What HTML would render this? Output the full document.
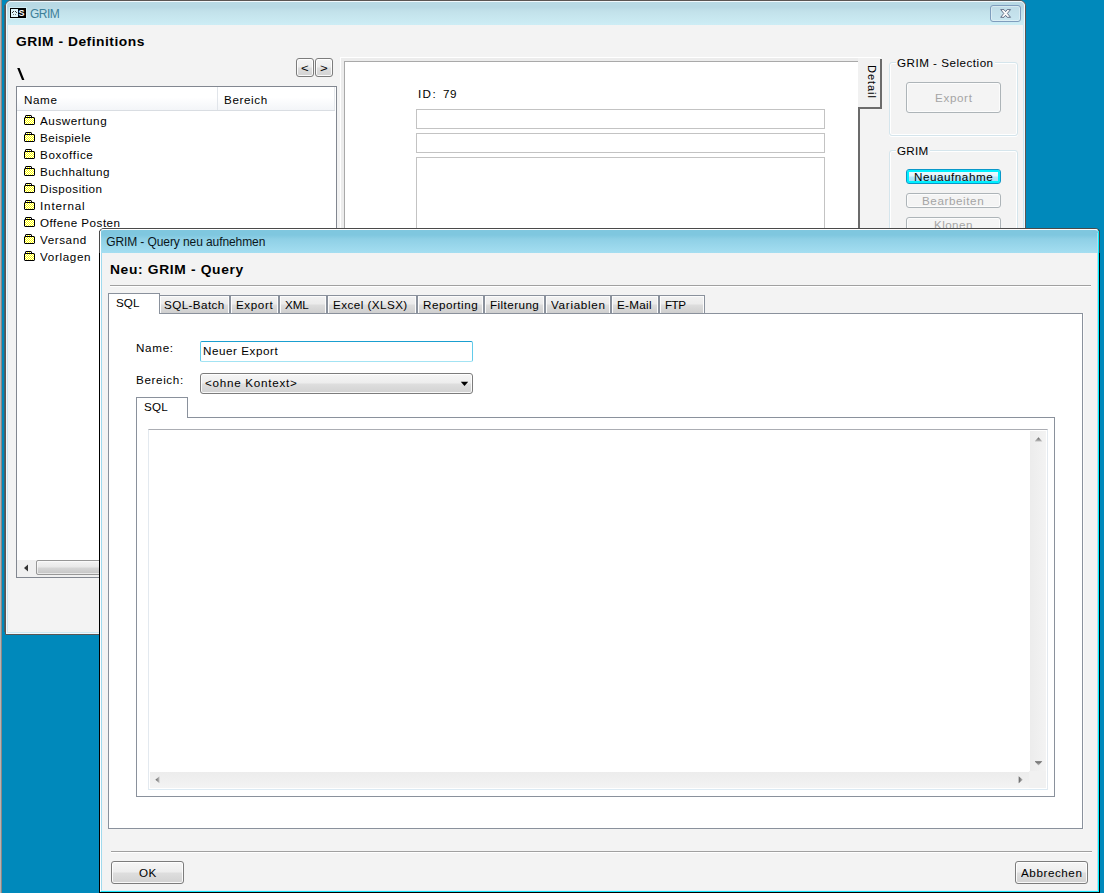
<!DOCTYPE html>
<html><head><meta charset="utf-8"><title>GRIM</title>
<style>
html,body{margin:0;padding:0;}
body{width:1104px;height:893px;overflow:hidden;background:#0089bb;font-family:"Liberation Sans",sans-serif;font-size:11px;color:#000;}
#desk{position:relative;width:1104px;height:893px;overflow:hidden;background:#0089bb;}
#desk div,#desk span,#desk svg,#desk i{position:absolute;box-sizing:border-box;display:block;}
.t{white-space:nowrap;line-height:16px;height:16px;transform-origin:0 0;}
.edge0{left:0;top:0;width:1px;height:893px;background:#b4b4b4;}
.edge1{left:1px;top:0;width:1px;height:893px;background:#8d8684;}
/* generic Win7 button */
.btn{border:1px solid #7c7c7c;border-radius:3px;background:linear-gradient(#f6f6f6 0%,#ededed 48%,#dedede 52%,#d2d2d2 100%);box-shadow:inset 0 0 0 1px rgba(255,255,255,.85);}
.btn.dis{border-color:#adb4b8;background:#f4f4f4;box-shadow:inset 0 0 0 1px #fcfcfc;}
.btn.def{border-color:#0a98c9;background:linear-gradient(#f4fcff 0%,#dff4fd 45%,#b5e6fa 55%,#9adcf5 100%);box-shadow:inset 0 0 0 2px #00f0ff;}
/* tabs */
.tab{border:1px solid #8a919c;border-bottom:none;background:linear-gradient(#f2f2f2 0%,#ebebeb 48%,#dddddd 52%,#cfcfcf 100%);box-shadow:inset 1px 1px 0 #fcfcfc,inset -1px 0 0 #fcfcfc;}
.tab.sel{background:#fff;box-shadow:none;}
.pane{border:1px solid #8a919c;background:#fff;}
.hline{height:2px;border-top:1px solid #a0a0a0;border-bottom:1px solid #fff;}
.fold{width:11px;height:10px;}
.inp{border:1px solid #c3c3c3;background:#fff;}
.grp{border:1px solid #d5e5ec;border-radius:3px;box-shadow:inset 0 0 0 1px #fff,0 1px 0 #fff;}

</style></head>
<body>
<div id="desk">
<div class="edge0"></div><div class="edge1"></div>
<!-- ===== window 1 ===== -->
<div style="left:4px;top:5px;width:1px;height:627px;background:rgba(91,85,83,.72);"></div>
<div style="left:5px;top:0;width:1021px;height:635px;background:#f3f3f3;border:1px solid #5b5553;border-radius:6px 6px 0 0;"></div>
<div style="left:6px;top:1px;width:1019px;height:633px;border:1px solid #f1f8fc;border-radius:5px 5px 0 0;"></div>
<div style="left:7px;top:2px;width:1017px;height:631px;border:1px solid #cde9f3;border-radius:4px 4px 0 0;"></div>
<div style="left:7px;top:2px;width:1017px;height:23px;background:linear-gradient(#b8d9e4 0%,#b8d9e4 22%,#c2e1ea 40%,#cdedf5 100%);border-radius:4px 4px 0 0;"></div>
<!-- app icon -->
<div style="left:10px;top:8px;width:16px;height:10px;background:#000;box-shadow:0 0 0 1px rgba(225,247,252,.55);"></div>
<div style="left:11px;top:9px;width:7px;height:8px;background:#dff5fb;"></div>
<svg style="left:11px;top:9px;width:7px;height:8px" viewBox="0 0 7 8" shape-rendering="crispEdges"><g fill="#3c3c3c"><rect x="2" y="2" width="1" height="1"/><rect x="4" y="2" width="1" height="1"/><rect x="1" y="3" width="1" height="1"/><rect x="5" y="3" width="1" height="1"/></g><g fill="#7a7a7a"><rect x="2" y="5" width="1" height="1"/><rect x="4" y="5" width="1" height="1"/></g></svg>
<span style="left:18.6px;top:7px;width:6px;height:12px;font-size:9px;line-height:12px;font-weight:700;color:#fff;">S</span>
<!-- close button -->
<div style="left:990px;top:5px;width:31px;height:17px;border:1px solid #7f9dbd;border-radius:3px;background:linear-gradient(#bfdce7,#c9e6f0);box-shadow:inset 0 0 0 1px rgba(255,255,255,.35);"></div>
<svg style="left:999px;top:8px;width:14px;height:11px" viewBox="0 0 14 11"><path d="M1.7 1.6 L5 1.6 L6.6 3.6 L8.2 1.6 L11.5 1.6 L8.4 5.45 L11.5 9.3 L8.2 9.3 L6.6 7.3 L5 9.3 L1.7 9.3 L4.8 5.45 Z" fill="#fcfcfc" stroke="#46536f" stroke-width=".8" stroke-linejoin="round"/></svg>
<svg style="left:16px;top:67px;width:10px;height:14px" viewBox="0 0 10 14"><path d="M1.2 1 L3.6 1 L8.4 13 L6 13 Z" fill="#000"/></svg>
<!-- nav buttons -->
<div class="btn" style="left:296px;top:58px;width:18px;height:19px;"></div>
<div class="btn" style="left:315px;top:58px;width:18px;height:19px;"></div>
<span class="t" style="left:300.6px;top:60px;font-size:11px;transform:scaleX(1.2);">&lt;</span>
<span class="t" style="left:319.6px;top:60px;font-size:11px;transform:scaleX(1.2);">&gt;</span>
<!-- list -->
<div style="left:16px;top:86px;width:321px;height:492px;border:1px solid #828790;background:#fff;"></div>
<div style="left:17px;top:87px;width:318px;height:24px;background:linear-gradient(#ffffff 0%,#ffffff 45%,#f3f5f8 100%);border-bottom:1px solid #d9dde2;"></div>
<div style="left:217px;top:87px;width:1px;height:23px;background:#e1e5ea;"></div>
<div style="left:334px;top:87px;width:1px;height:23px;background:#e6e9ed;"></div>
<svg width="0" height="0" style="left:0;top:0"><defs>
<pattern id="dz" width="2" height="2" patternUnits="userSpaceOnUse"><rect width="2" height="2" fill="#fff"/><rect width="1" height="1" fill="#ff0"/><rect x="1" y="1" width="1" height="1" fill="#ff0"/></pattern>
</defs></svg>
<svg class="fold" style="left:24px;top:115px" viewBox="0 0 11 10" shape-rendering="crispEdges"><rect x="2" y="1" width="5" height="1" fill="url(#dz)"/><rect x="1" y="3" width="9" height="6" fill="url(#dz)"/><g fill="#000"><rect x="2" y="0" width="5" height="1"/><rect x="1" y="1" width="1" height="1"/><rect x="7" y="1" width="1" height="1"/><rect x="1" y="2" width="9" height="1"/><rect x="0" y="3" width="1" height="6"/><rect x="10" y="3" width="1" height="6"/><rect x="1" y="9" width="9" height="1"/></g><g fill="#000" opacity=".45"><rect x="0" y="2" width="1" height="1"/><rect x="10" y="2" width="1" height="1"/><rect x="0" y="9" width="1" height="1"/><rect x="10" y="9" width="1" height="1"/><rect x="1" y="0" width="1" height="1"/><rect x="7" y="0" width="1" height="1"/></g></svg>
<svg class="fold" style="left:24px;top:132px" viewBox="0 0 11 10" shape-rendering="crispEdges"><rect x="2" y="1" width="5" height="1" fill="url(#dz)"/><rect x="1" y="3" width="9" height="6" fill="url(#dz)"/><g fill="#000"><rect x="2" y="0" width="5" height="1"/><rect x="1" y="1" width="1" height="1"/><rect x="7" y="1" width="1" height="1"/><rect x="1" y="2" width="9" height="1"/><rect x="0" y="3" width="1" height="6"/><rect x="10" y="3" width="1" height="6"/><rect x="1" y="9" width="9" height="1"/></g><g fill="#000" opacity=".45"><rect x="0" y="2" width="1" height="1"/><rect x="10" y="2" width="1" height="1"/><rect x="0" y="9" width="1" height="1"/><rect x="10" y="9" width="1" height="1"/><rect x="1" y="0" width="1" height="1"/><rect x="7" y="0" width="1" height="1"/></g></svg>
<svg class="fold" style="left:24px;top:149px" viewBox="0 0 11 10" shape-rendering="crispEdges"><rect x="2" y="1" width="5" height="1" fill="url(#dz)"/><rect x="1" y="3" width="9" height="6" fill="url(#dz)"/><g fill="#000"><rect x="2" y="0" width="5" height="1"/><rect x="1" y="1" width="1" height="1"/><rect x="7" y="1" width="1" height="1"/><rect x="1" y="2" width="9" height="1"/><rect x="0" y="3" width="1" height="6"/><rect x="10" y="3" width="1" height="6"/><rect x="1" y="9" width="9" height="1"/></g><g fill="#000" opacity=".45"><rect x="0" y="2" width="1" height="1"/><rect x="10" y="2" width="1" height="1"/><rect x="0" y="9" width="1" height="1"/><rect x="10" y="9" width="1" height="1"/><rect x="1" y="0" width="1" height="1"/><rect x="7" y="0" width="1" height="1"/></g></svg>
<svg class="fold" style="left:24px;top:166px" viewBox="0 0 11 10" shape-rendering="crispEdges"><rect x="2" y="1" width="5" height="1" fill="url(#dz)"/><rect x="1" y="3" width="9" height="6" fill="url(#dz)"/><g fill="#000"><rect x="2" y="0" width="5" height="1"/><rect x="1" y="1" width="1" height="1"/><rect x="7" y="1" width="1" height="1"/><rect x="1" y="2" width="9" height="1"/><rect x="0" y="3" width="1" height="6"/><rect x="10" y="3" width="1" height="6"/><rect x="1" y="9" width="9" height="1"/></g><g fill="#000" opacity=".45"><rect x="0" y="2" width="1" height="1"/><rect x="10" y="2" width="1" height="1"/><rect x="0" y="9" width="1" height="1"/><rect x="10" y="9" width="1" height="1"/><rect x="1" y="0" width="1" height="1"/><rect x="7" y="0" width="1" height="1"/></g></svg>
<svg class="fold" style="left:24px;top:183px" viewBox="0 0 11 10" shape-rendering="crispEdges"><rect x="2" y="1" width="5" height="1" fill="url(#dz)"/><rect x="1" y="3" width="9" height="6" fill="url(#dz)"/><g fill="#000"><rect x="2" y="0" width="5" height="1"/><rect x="1" y="1" width="1" height="1"/><rect x="7" y="1" width="1" height="1"/><rect x="1" y="2" width="9" height="1"/><rect x="0" y="3" width="1" height="6"/><rect x="10" y="3" width="1" height="6"/><rect x="1" y="9" width="9" height="1"/></g><g fill="#000" opacity=".45"><rect x="0" y="2" width="1" height="1"/><rect x="10" y="2" width="1" height="1"/><rect x="0" y="9" width="1" height="1"/><rect x="10" y="9" width="1" height="1"/><rect x="1" y="0" width="1" height="1"/><rect x="7" y="0" width="1" height="1"/></g></svg>
<svg class="fold" style="left:24px;top:200px" viewBox="0 0 11 10" shape-rendering="crispEdges"><rect x="2" y="1" width="5" height="1" fill="url(#dz)"/><rect x="1" y="3" width="9" height="6" fill="url(#dz)"/><g fill="#000"><rect x="2" y="0" width="5" height="1"/><rect x="1" y="1" width="1" height="1"/><rect x="7" y="1" width="1" height="1"/><rect x="1" y="2" width="9" height="1"/><rect x="0" y="3" width="1" height="6"/><rect x="10" y="3" width="1" height="6"/><rect x="1" y="9" width="9" height="1"/></g><g fill="#000" opacity=".45"><rect x="0" y="2" width="1" height="1"/><rect x="10" y="2" width="1" height="1"/><rect x="0" y="9" width="1" height="1"/><rect x="10" y="9" width="1" height="1"/><rect x="1" y="0" width="1" height="1"/><rect x="7" y="0" width="1" height="1"/></g></svg>
<svg class="fold" style="left:24px;top:217px" viewBox="0 0 11 10" shape-rendering="crispEdges"><rect x="2" y="1" width="5" height="1" fill="url(#dz)"/><rect x="1" y="3" width="9" height="6" fill="url(#dz)"/><g fill="#000"><rect x="2" y="0" width="5" height="1"/><rect x="1" y="1" width="1" height="1"/><rect x="7" y="1" width="1" height="1"/><rect x="1" y="2" width="9" height="1"/><rect x="0" y="3" width="1" height="6"/><rect x="10" y="3" width="1" height="6"/><rect x="1" y="9" width="9" height="1"/></g><g fill="#000" opacity=".45"><rect x="0" y="2" width="1" height="1"/><rect x="10" y="2" width="1" height="1"/><rect x="0" y="9" width="1" height="1"/><rect x="10" y="9" width="1" height="1"/><rect x="1" y="0" width="1" height="1"/><rect x="7" y="0" width="1" height="1"/></g></svg>
<svg class="fold" style="left:24px;top:234px" viewBox="0 0 11 10" shape-rendering="crispEdges"><rect x="2" y="1" width="5" height="1" fill="url(#dz)"/><rect x="1" y="3" width="9" height="6" fill="url(#dz)"/><g fill="#000"><rect x="2" y="0" width="5" height="1"/><rect x="1" y="1" width="1" height="1"/><rect x="7" y="1" width="1" height="1"/><rect x="1" y="2" width="9" height="1"/><rect x="0" y="3" width="1" height="6"/><rect x="10" y="3" width="1" height="6"/><rect x="1" y="9" width="9" height="1"/></g><g fill="#000" opacity=".45"><rect x="0" y="2" width="1" height="1"/><rect x="10" y="2" width="1" height="1"/><rect x="0" y="9" width="1" height="1"/><rect x="10" y="9" width="1" height="1"/><rect x="1" y="0" width="1" height="1"/><rect x="7" y="0" width="1" height="1"/></g></svg>
<svg class="fold" style="left:24px;top:251px" viewBox="0 0 11 10" shape-rendering="crispEdges"><rect x="2" y="1" width="5" height="1" fill="url(#dz)"/><rect x="1" y="3" width="9" height="6" fill="url(#dz)"/><g fill="#000"><rect x="2" y="0" width="5" height="1"/><rect x="1" y="1" width="1" height="1"/><rect x="7" y="1" width="1" height="1"/><rect x="1" y="2" width="9" height="1"/><rect x="0" y="3" width="1" height="6"/><rect x="10" y="3" width="1" height="6"/><rect x="1" y="9" width="9" height="1"/></g><g fill="#000" opacity=".45"><rect x="0" y="2" width="1" height="1"/><rect x="10" y="2" width="1" height="1"/><rect x="0" y="9" width="1" height="1"/><rect x="10" y="9" width="1" height="1"/><rect x="1" y="0" width="1" height="1"/><rect x="7" y="0" width="1" height="1"/></g></svg>
<!-- list h-scrollbar -->
<div style="left:17px;top:560px;width:319px;height:17px;background:#f0f0f0;"></div>
<svg style="left:23px;top:564px;width:6px;height:8px" viewBox="0 0 6 8"><path d="M5 .5 L5 7.5 L1 4 Z" fill="#333"/></svg>
<div style="left:36px;top:560px;width:230px;height:15px;border:1px solid #979797;border-radius:2px;background:linear-gradient(#f4f4f4 0%,#e9e9e9 45%,#d6d6d6 55%,#c4c4c4 100%);box-shadow:inset 0 0 0 1px rgba(255,255,255,.6);"></div>
<!-- right-tabbed panel -->
<div style="left:340px;top:57px;width:520px;height:520px;background:#ececec;border-left:1px solid #fff;border-top:1px solid #fff;"></div>
<div style="left:858px;top:57px;width:23px;height:50px;background:#f1f1f1;border-top:1px solid #fff;"></div>
<div style="left:880px;top:59px;width:2px;height:50px;background:#6b6b6b;"></div>
<div style="left:859px;top:107px;width:23px;height:2px;background:#6b6b6b;"></div>
<div style="left:858px;top:107px;width:2px;height:470px;background:#6b6b6b;"></div>
<div style="left:344px;top:61px;width:514px;height:516px;background:#fff;border-left:1px solid #a9a9a9;border-top:1px solid #a9a9a9;"></div>
<div style="left:858px;top:58px;width:1px;height:49px;background:#f1f1f1;"></div>
<span class="t" style="left:879.5px;top:65px;transform:rotate(90deg);letter-spacing:0.95px;">Detail</span>
<div class="inp" style="left:416px;top:109px;width:409px;height:20px;"></div>
<div class="inp" style="left:416px;top:133px;width:409px;height:20px;"></div>
<div class="inp" style="left:416px;top:157px;width:409px;height:120px;"></div>
<!-- group boxes -->
<div class="grp" style="left:889px;top:62px;width:129px;height:74px;"></div>
<div style="left:896px;top:62px;width:99px;height:2px;background:#f3f3f3;"></div>
<div class="btn dis" style="left:906px;top:82px;width:95px;height:31px;"></div>
<div class="grp" style="left:889px;top:150px;width:129px;height:200px;"></div>
<div style="left:896px;top:150px;width:34px;height:2px;background:#f3f3f3;"></div>
<div class="btn def" style="left:906px;top:169px;width:95px;height:15px;"></div>
<div class="btn dis" style="left:906px;top:193px;width:95px;height:15px;"></div>
<div class="btn dis" style="left:906px;top:217px;width:95px;height:15px;"></div>

<span class="t" id="t0" style="left:29.90px;top:6px;font-size:12px;color:#3d7f99;letter-spacing:-0.46px;">GRIM</span>
<span class="t" id="t1" style="left:16.40px;top:34px;font-size:12px;font-weight:700;letter-spacing:0.45px;transform:scaleX(1.15);">GRIM - Definitions</span>
<span class="t" id="t2" style="left:23.90px;top:92px;font-size:11px;letter-spacing:0.57px;transform:scaleX(1.06);">Name</span>
<span class="t" id="t3" style="left:223.65px;top:92px;font-size:11px;letter-spacing:0.57px;transform:scaleX(1.06);">Bereich</span>
<span class="t" id="t4" style="left:39.90px;top:113px;font-size:11px;letter-spacing:0.53px;transform:scaleX(1.06);">Auswertung</span>
<span class="t" id="t5" style="left:39.90px;top:130px;font-size:11px;letter-spacing:0.41px;transform:scaleX(1.06);">Beispiele</span>
<span class="t" id="t6" style="left:39.90px;top:147px;font-size:11px;letter-spacing:0.60px;transform:scaleX(1.06);">Boxoffice</span>
<span class="t" id="t7" style="left:39.90px;top:164px;font-size:11px;letter-spacing:0.44px;transform:scaleX(1.06);">Buchhaltung</span>
<span class="t" id="t8" style="left:39.90px;top:181px;font-size:11px;letter-spacing:0.47px;transform:scaleX(1.06);">Disposition</span>
<span class="t" id="t9" style="left:39.90px;top:198px;font-size:11px;letter-spacing:0.78px;transform:scaleX(1.06);">Internal</span>
<span class="t" id="t10" style="left:39.90px;top:215px;font-size:11px;letter-spacing:0.45px;transform:scaleX(1.06);">Offene Posten</span>
<span class="t" id="t11" style="left:39.90px;top:232px;font-size:11px;letter-spacing:0.53px;transform:scaleX(1.06);">Versand</span>
<span class="t" id="t12" style="left:39.90px;top:249px;font-size:11px;letter-spacing:0.61px;transform:scaleX(1.06);">Vorlagen</span>
<span class="t" id="t13" style="left:417.65px;top:86px;font-size:11px;letter-spacing:1.29px;transform:scaleX(1.06);">ID:</span>
<span class="t" id="t14" style="left:443.15px;top:86px;font-size:11px;letter-spacing:0.48px;transform:scaleX(1.06);">79</span>
<span class="t" id="t15" style="left:896.90px;top:55px;font-size:11px;letter-spacing:0.46px;transform:scaleX(1.06);">GRIM - Selection</span>
<span class="t" id="t16" style="left:934.90px;top:90px;font-size:11px;color:#a5a5a5;letter-spacing:0.60px;transform:scaleX(1.06);">Export</span>
<span class="t" id="t17" style="left:896.90px;top:143px;font-size:11px;letter-spacing:0.25px;transform:scaleX(1.06);">GRIM</span>
<span class="t" id="t18" style="left:913.65px;top:169px;font-size:11px;letter-spacing:0.51px;transform:scaleX(1.06);">Neuaufnahme</span>
<span class="t" id="t19" style="left:921.90px;top:193px;font-size:11px;color:#a5a5a5;letter-spacing:0.55px;transform:scaleX(1.06);">Bearbeiten</span>
<span class="t" id="t20" style="left:933.80px;top:217px;font-size:11px;color:#a5a5a5;letter-spacing:0.39px;transform:scaleX(1.06);">Klonen</span>
<!-- ===== window 2 ===== -->
<div style="left:99px;top:228px;width:1001px;height:665px;background:#f3f3f3;border:1px solid #000;border-top-color:#4a4a4a;border-radius:5px 5px 0 0;"></div>
<div style="left:99px;top:231px;width:1px;height:22px;background:#4a4a4a;"></div>
<div style="left:1099px;top:231px;width:1px;height:22px;background:#454545;"></div>
<div style="left:100px;top:229px;width:999px;height:663px;border:1px solid #fff;border-right-color:#00f0ff;border-bottom-color:#19e9fc;border-radius:4px 4px 0 0;"></div>
<div style="left:101px;top:230px;width:997px;height:661px;border-left:1px solid #a0daee;border-right:1px solid #b8e0f0;border-bottom:1px solid #d9f0f8;"></div>
<div style="left:1096px;top:253px;width:1px;height:637px;background:#f8f2f0;"></div>
<div style="left:101px;top:230px;width:997px;height:23px;background:linear-gradient(#7fc7df 0%,#7fc7df 22%,#8fd0e6 40%,#a4def1 100%);border-radius:3px 3px 0 0;"></div>
<div style="left:1097px;top:233px;width:1px;height:20px;background:#b4dcee;"></div>
<!-- heading rule -->
<div class="hline" style="left:110px;top:285px;width:981px;"></div>
<!-- outer tab pane -->
<div class="pane" style="left:108px;top:313px;width:975px;height:516px;box-shadow:1px 0 0 #fbfbfb;"></div>
<div class="tab sel" style="left:108px;top:293px;width:52px;height:21px;"></div>
<div class="tab" style="left:160px;top:295px;width:70px;height:18px;border-left:none;"></div>
<div class="tab" style="left:230px;top:295px;width:49px;height:18px;"></div>
<div class="tab" style="left:279px;top:295px;width:48px;height:18px;"></div>
<div class="tab" style="left:327px;top:295px;width:90px;height:18px;"></div>
<div class="tab" style="left:417px;top:295px;width:67px;height:18px;"></div>
<div class="tab" style="left:484px;top:295px;width:61px;height:18px;"></div>
<div class="tab" style="left:545px;top:295px;width:66px;height:18px;"></div>
<div class="tab" style="left:611px;top:295px;width:48px;height:18px;"></div>
<div class="tab" style="left:659px;top:295px;width:46px;height:18px;"></div>
<!-- name input (focused) -->
<div style="left:200px;top:341px;width:273px;height:21px;background:#fff;border:1px solid #1a9fd0;border-bottom-color:#a3e3f3;border-left-color:#62cbea;border-right-color:#62cbea;border-radius:2px;"></div>
<!-- combo -->
<div class="btn" style="left:200px;top:373px;width:273px;height:21px;border-color:#7c7c7c;"></div>
<svg style="left:460px;top:381px;width:9px;height:6px" viewBox="0 0 9 6"><path d="M.8 .8 L8.2 .8 L4.5 5 Z" fill="#000"/></svg>
<!-- inner tab pane -->
<div class="pane" style="left:136px;top:417px;width:919px;height:380px;"></div>
<div class="tab sel" style="left:136px;top:397px;width:52px;height:21px;"></div>
<!-- memo -->
<div style="left:148px;top:429px;width:900px;height:361px;background:#fff;border:1px solid #e3e9ef;border-top-color:#abadb3;border-bottom-color:#dceaf3;"></div>
<div style="left:1030px;top:431px;width:16px;height:340px;background:linear-gradient(90deg,#ececec,#f3f3f3);"></div>
<div style="left:150px;top:772px;width:879px;height:16px;background:linear-gradient(#ececec,#f3f3f3);"></div>
<div style="left:1029px;top:771px;width:17px;height:17px;background:#f1f1f1;"></div>
<svg width="0" height="0" style="left:0;top:0"><defs><linearGradient id="gv" x1="0" y1="0" x2="0" y2="1"><stop offset="0" stop-color="#5f5f5f"/><stop offset="1" stop-color="#c0c0c0"/></linearGradient><linearGradient id="gh" x1="0" y1="0" x2="1" y2="0"><stop offset="0" stop-color="#5f5f5f"/><stop offset="1" stop-color="#c0c0c0"/></linearGradient><linearGradient id="gh2" x1="1" y1="0" x2="0" y2="0"><stop offset="0" stop-color="#5f5f5f"/><stop offset="1" stop-color="#c0c0c0"/></linearGradient></defs></svg>
<svg style="left:1035px;top:437px;width:8px;height:5px" viewBox="0 0 8 5"><path d="M3.5 .3 L7.3 4.4 L-.3 4.4 Z" fill="url(#gv)"/></svg>
<svg style="left:1035px;top:761px;width:8px;height:5px" viewBox="0 0 8 5"><path d="M-.3 .3 L7.3 .3 L3.5 4.5 Z" fill="url(#gv)"/></svg>
<svg style="left:155.4px;top:776px;width:5px;height:8px" viewBox="0 0 5 8"><path d="M4.5 .2 L4.5 7.2 L.4 3.7 Z" fill="url(#gh)"/></svg>
<svg style="left:1018px;top:776px;width:5px;height:8px" viewBox="0 0 5 8"><path d="M.7 .2 L4.8 3.7 L.7 7.2 Z" fill="url(#gh)"/></svg>
<!-- footer -->
<div class="hline" style="left:111px;top:851px;width:981px;"></div>
<div class="btn" style="left:111px;top:861px;width:73px;height:23px;"></div>
<div class="btn" style="left:1015px;top:861px;width:73px;height:23px;"></div>

<span class="t" id="t21" style="left:106.15px;top:234px;font-size:12px;color:#0a161c;letter-spacing:-0.09px;">GRIM - Query neu aufnehmen</span>
<span class="t" id="t22" style="left:109.65px;top:262px;font-size:12px;font-weight:700;letter-spacing:0.57px;transform:scaleX(1.15);">Neu: GRIM - Query</span>
<span class="t" id="t23" style="left:115.90px;top:295px;font-size:11px;letter-spacing:0.05px;transform:scaleX(1.06);">SQL</span>
<span class="t" id="t24" style="left:163.65px;top:297px;font-size:11px;letter-spacing:0.39px;transform:scaleX(1.06);">SQL-Batch</span>
<span class="t" id="t25" style="left:235.90px;top:297px;font-size:11px;letter-spacing:0.56px;transform:scaleX(1.06);">Export</span>
<span class="t" id="t26" style="left:284.65px;top:297px;font-size:11px;letter-spacing:-0.07px;transform:scaleX(1.06);">XML</span>
<span class="t" id="t27" style="left:332.65px;top:297px;font-size:11px;letter-spacing:0.42px;transform:scaleX(1.06);">Excel (XLSX)</span>
<span class="t" id="t28" style="left:422.65px;top:297px;font-size:11px;letter-spacing:0.49px;transform:scaleX(1.06);">Reporting</span>
<span class="t" id="t29" style="left:489.90px;top:297px;font-size:11px;letter-spacing:0.41px;transform:scaleX(1.06);">Filterung</span>
<span class="t" id="t30" style="left:550.65px;top:297px;font-size:11px;letter-spacing:0.66px;transform:scaleX(1.06);">Variablen</span>
<span class="t" id="t31" style="left:616.90px;top:297px;font-size:11px;letter-spacing:0.27px;transform:scaleX(1.06);">E-Mail</span>
<span class="t" id="t32" style="left:664.90px;top:297px;font-size:11px;letter-spacing:-0.48px;transform:scaleX(1.06);">FTP</span>
<span class="t" id="t33" style="left:136.15px;top:340px;font-size:11px;letter-spacing:0.64px;transform:scaleX(1.06);">Name:</span>
<span class="t" id="t34" style="left:202.90px;top:343px;font-size:11px;letter-spacing:0.51px;transform:scaleX(1.06);">Neuer Export</span>
<span class="t" id="t35" style="left:136.15px;top:372px;font-size:11px;letter-spacing:0.59px;transform:scaleX(1.06);">Bereich:</span>
<span class="t" id="t36" style="left:204.65px;top:375px;font-size:11px;letter-spacing:0.68px;transform:scaleX(1.06);">&lt;ohne Kontext&gt;</span>
<span class="t" id="t37" style="left:143.65px;top:399px;font-size:11px;letter-spacing:0.21px;transform:scaleX(1.06);">SQL</span>
<span class="t" id="t38" style="left:138.65px;top:865px;font-size:11px;letter-spacing:0.42px;transform:scaleX(1.06);">OK</span>
<span class="t" id="t39" style="left:1020.65px;top:865px;font-size:11px;letter-spacing:0.53px;transform:scaleX(1.06);">Abbrechen</span>
</div>
</body></html>
